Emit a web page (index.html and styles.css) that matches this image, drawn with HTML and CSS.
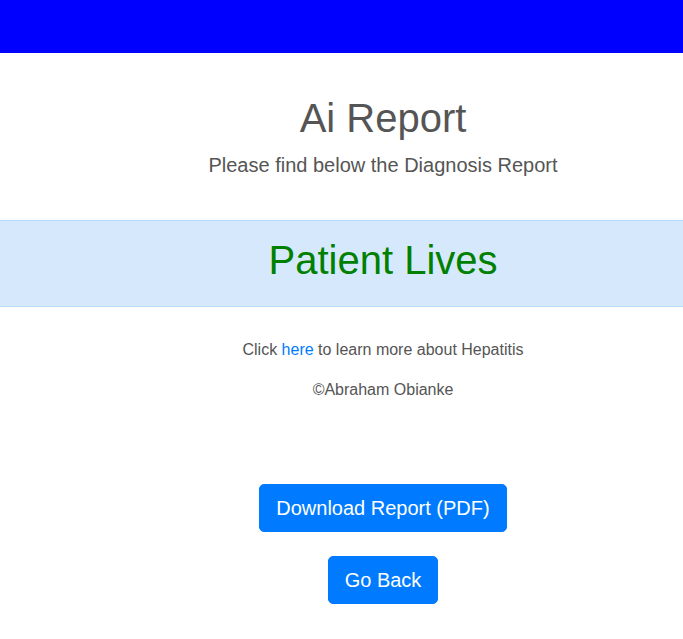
FILE: index.html
```html
<!DOCTYPE html>
<html>
<head>
<meta charset="utf-8">
<link rel="stylesheet" href="styles.css">
</head>
<body>
<div class="topbar"></div>
<header class="intro shifted">
  <h1 class="title">Ai Report</h1>
  <p class="subtitle">Please find below the Diagnosis Report</p>
</header>
<div class="result shifted">Patient Lives</div>
<section class="info shifted">
  <p>Click <a href="#">here</a> to learn more about Hepatitis</p>
  <p>©Abraham Obianke</p>
</section>
<div class="actions shifted">
  <button class="btn">Download Report (PDF)</button>
  <button class="btn">Go Back</button>
</div>
</body>
</html>
```
FILE: styles.css
```css
* { box-sizing: border-box; }
body {
  margin: 0;
  font-family: "Liberation Sans", Arial, sans-serif;
  color: #555;
  background: #fff;
}
.shifted { padding-left: 83px; }
.topbar {
  height: 53px;
  background: #0000ff;
}
.intro {
  text-align: center;
  padding-top: 41px;
}
.title {
  margin: 0;
  font-size: 40px;
  font-weight: 400;
  line-height: 48px;
}
.subtitle {
  margin: 11px 0 0;
  font-size: 20px;
  line-height: 24px;
}
.result {
  margin-top: 43px;
  background: #d6e9fc;
  border-top: 1px solid #b8daff;
  border-bottom: 1px solid #b8daff;
  color: #008000;
  text-align: center;
  font-size: 40px;
  line-height: 48px;
  padding-top: 15px;
  padding-bottom: 22px;
}
.info {
  text-align: center;
  font-size: 16px;
  line-height: 24px;
  padding-top: 31px;
}
.info p { margin: 0 0 16px; }
.info a { color: #007bff; text-decoration: none; }
.actions {
  display: flex;
  flex-direction: column;
  align-items: center;
  gap: 24px;
  padding-top: 66px;
}
.btn {
  font-family: "Liberation Sans", Arial, sans-serif;
  font-size: 20px;
  line-height: 30px;
  padding: 8px 16px;
  border: 1px solid #007bff;
  background: #007bff;
  color: #fff;
  border-radius: 5px;
}
```
